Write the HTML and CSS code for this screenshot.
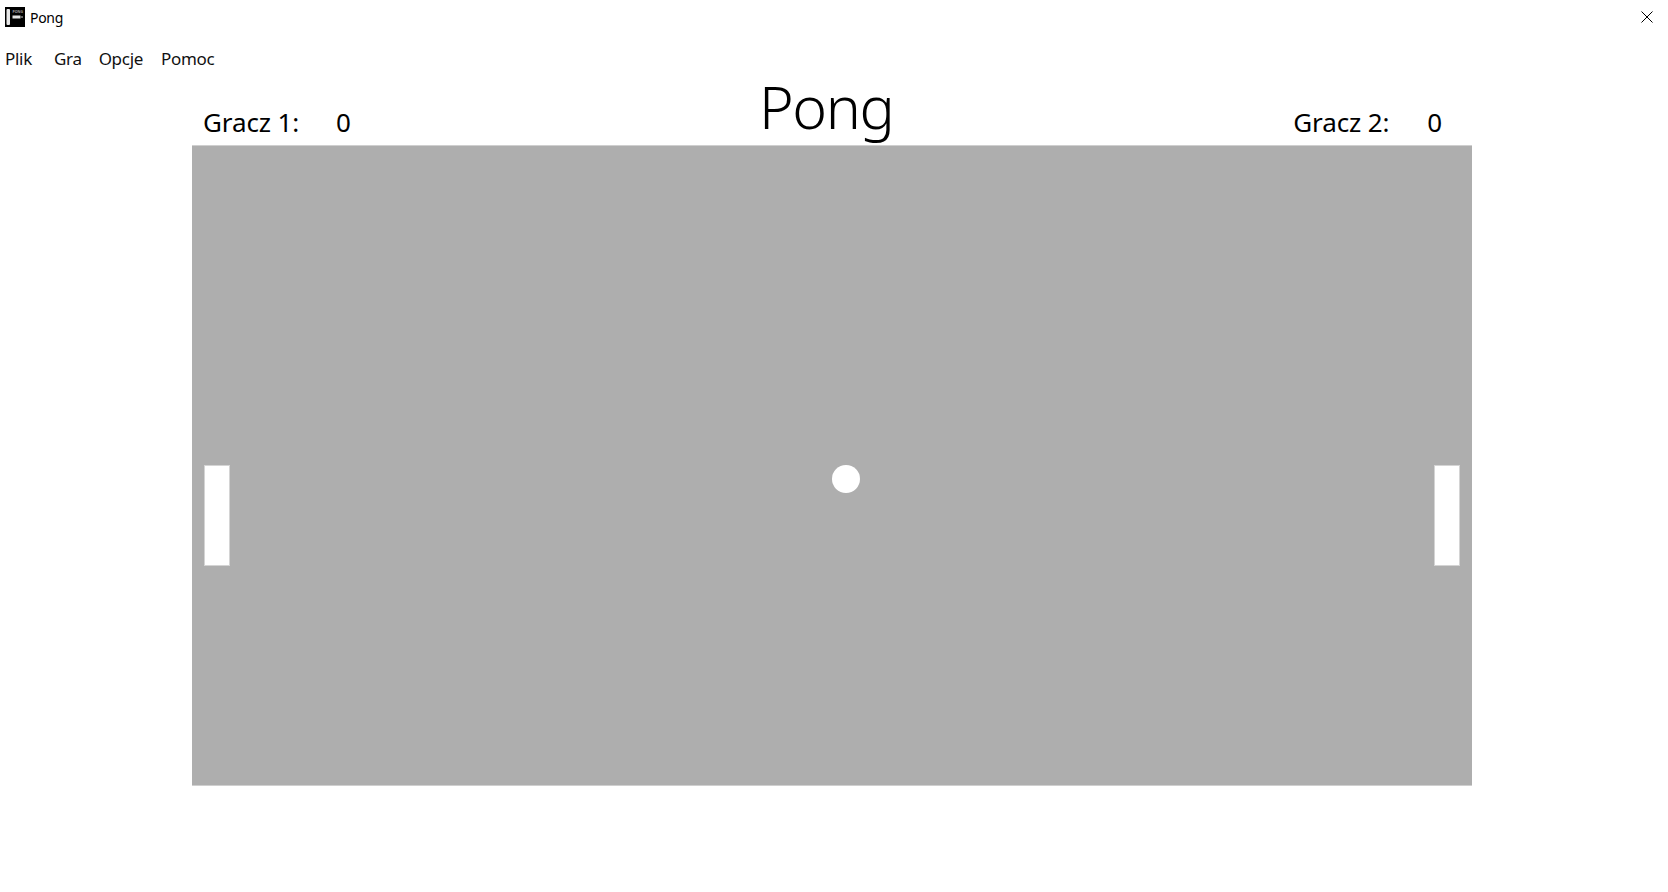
FILE: index.html
```html
<!DOCTYPE html>
<html lang="pl">
<head>
    <meta charset="UTF-8">
    <meta name="viewport" content="width=device-width, initial-scale=1.0">
    <title>Pong</title>
    <link rel="stylesheet" href="styles.css">
</head>
<body>
    <div class="titlebar">
        <svg class="app-icon" width="20" height="20" viewBox="0 0 20 20">
            <rect width="20" height="20" fill="#000"/>
            <rect x="1.5" y="2" width="3.5" height="16" rx="1" fill="#e8e8e8"/>
            <text class="icon-text" x="7.5" y="5.5">PONG</text>
            <rect x="7.5" y="8.5" width="8" height="3" fill="#e0e0e0"/>
            <rect x="15.5" y="9" width="2.5" height="2" fill="#666"/>
        </svg>
        <span class="app-name">Pong</span>
        <svg class="close" width="12" height="12" viewBox="0 0 12 12">
            <path d="M0.5 0.5 L11.5 11.5 M11.5 0.5 L0.5 11.5" stroke="#000" stroke-width="1" fill="none"/>
        </svg>
    </div>
    <div class="menu">
        <span class="menu-item item-plik">Plik</span>
        <span class="menu-item item-gra">Gra</span>
        <span class="menu-item item-opcje">Opcje</span>
        <span class="menu-item">Pomoc</span>
    </div>
    <div class="game">
        <div class="header">
            <div class="score">
                <span class="score-label">Gracz 1:</span>
                <span>0</span>
            </div>
            <h1>Pong</h1>
            <div class="score score-right">
                <span class="score-label">Gracz 2:</span>
                <span>0</span>
            </div>
        </div>
        <div class="board">
            <div class="paddle paddle-left"></div>
            <div class="ball"></div>
            <div class="paddle paddle-right"></div>
        </div>
    </div>
</body>
</html>
```

FILE: styles.css
```css
* {
    margin: 0;
    padding: 0;
    box-sizing: border-box;
    font-family: 'Noto Sans', 'Open Sans', sans-serif;
}

html, body {
    height: 100%;
}

body {
    background-color: #fff;
    color: #000;
    overflow: hidden;
}

.titlebar {
    display: flex;
    align-items: center;
    height: 34px;
    padding: 0 15px 0 5px;
}

.app-icon {
    margin-right: 5px;
}

.icon-text {
    font-size: 3.6px;
    font-weight: 700;
    fill: #a0a0a0;
}

.app-name {
    font-size: 14px;
    letter-spacing: -0.3px;
}

.close {
    margin-left: auto;
}

.menu {
    display: flex;
    height: 50px;
    padding: 13px 0 0 5px;
}

.menu-item {
    font-size: 17px;
    line-height: 24px;
    letter-spacing: -0.3px;
    color: #111;
}

.item-plik {
    margin-right: 22px;
}

.item-gra {
    margin-right: 17px;
}

.item-opcje {
    margin-right: 18px;
}

.game {
    width: 1280px;
    margin-left: 192px;
}

.header {
    display: flex;
    align-items: flex-end;
    height: 61px;
    padding: 0 30px 0 11px;
}

.score {
    display: flex;
    width: 320px;
    font-size: 26px;
    line-height: 34px;
    letter-spacing: -0.1px;
    padding-bottom: 6px;
}

.score-label {
    width: 133px;
}

.score-right {
    width: auto;
    margin-left: auto;
}

.score-right .score-label {
    width: 134px;
}

h1 {
    margin-left: 236px;
    margin-bottom: 3px;
    font-size: 59px;
    font-weight: 300;
    line-height: 72px;
    letter-spacing: -1.4px;
}

.board {
    position: relative;
    height: 641px;
    background-color: #aeaeae;
    border-top: 1px solid #cfcfcf;
    border-bottom: 1px solid #cfcfcf;
}

.paddle {
    position: absolute;
    top: 319px;
    width: 26px;
    height: 101px;
    background-color: #fff;
    border: 1px solid #d4d4d4;
}

.paddle-left {
    left: 12px;
}

.paddle-right {
    right: 12px;
}

.ball {
    position: absolute;
    left: 640px;
    top: 319px;
    width: 28px;
    height: 28px;
    border-radius: 50%;
    background-color: #fff;
}
```
